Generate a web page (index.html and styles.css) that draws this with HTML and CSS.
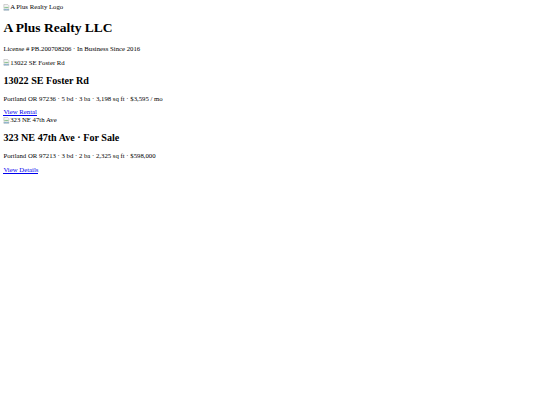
FILE: index.html
```html
<!DOCTYPE html>
<html>
<head>
<meta charset="utf-8">
<title>A Plus Realty LLC</title>
<link rel="stylesheet" href="styles.css">
</head>
<body>
<div class="logo"><svg class="broken" viewBox="0 0 16 16"><path d="M2 1h9l3 3v5l-2 1-2-1-2 1-2-1-2 1-2-1z" fill="#f4f4f4" stroke="#9a9a9a" stroke-width="1"/><path d="M3 10l3-3 2 2 2-2 3 3" fill="none" stroke="#4caf50" stroke-width="1.5"/><path d="M2 12l2 1 2-1 2 1 2-1 2 1 2-1v3H2z" fill="#6bb7e8" stroke="#9a9a9a" stroke-width="1"/></svg>A Plus Realty Logo</div>
<h1 class="title">A Plus Realty LLC</h1>
<p class="text">License # PB.200708206 · In Business Since 2016</p>
<div class="listing">
  <div class="photo"><svg class="broken" viewBox="0 0 16 16"><path d="M2 1h9l3 3v5l-2 1-2-1-2 1-2-1-2 1-2-1z" fill="#f4f4f4" stroke="#9a9a9a" stroke-width="1"/><path d="M3 10l3-3 2 2 2-2 3 3" fill="none" stroke="#4caf50" stroke-width="1.5"/><path d="M2 12l2 1 2-1 2 1 2-1 2 1 2-1v3H2z" fill="#6bb7e8" stroke="#9a9a9a" stroke-width="1"/></svg>13022 SE Foster Rd</div>
  <h2 class="heading">13022 SE Foster Rd</h2>
  <p class="text">Portland OR 97236 · 5 bd · 3 ba · 3,198 sq ft · $3,595 / mo</p>
  <div class="more"><a class="link" href="#">View Rental</a></div>
</div>
<div class="listing">
  <div class="photo"><svg class="broken" viewBox="0 0 16 16"><path d="M2 1h9l3 3v5l-2 1-2-1-2 1-2-1-2 1-2-1z" fill="#f4f4f4" stroke="#9a9a9a" stroke-width="1"/><path d="M3 10l3-3 2 2 2-2 3 3" fill="none" stroke="#4caf50" stroke-width="1.5"/><path d="M2 12l2 1 2-1 2 1 2-1 2 1 2-1v3H2z" fill="#6bb7e8" stroke="#9a9a9a" stroke-width="1"/></svg>323 NE 47th Ave</div>
  <h2 class="heading">323 NE 47th Ave · For Sale</h2>
  <p class="text">Portland OR 97213 · 3 bd · 2 ba · 2,325 sq ft · $598,000</p>
  <div class="more"><a class="link" href="#">View Details</a></div>
</div>
</body>
</html>
```

FILE: styles.css
```css
html { background: #fff; }
body {
  margin: 3.375px;
  font-family: "Liberation Serif", "Times New Roman", serif;
  font-size: 6.75px;
  color: #000;
}
.logo, .photo {
  display: flex;
  align-items: center;
  height: 7.75px;
  line-height: 7.75px;
}
.broken {
  width: 6.75px;
  height: 6.75px;
  flex: none;
}
.title {
  font-size: 13.5px;
  font-weight: bold;
  margin: 9.05px 0;
}
.heading {
  font-size: 10.125px;
  font-weight: bold;
  margin: 8.4px 0;
}
.text {
  margin: 6.75px 0;
}
.more {
  height: 8px;
  display: flex;
  align-items: flex-start;
}
.link {
  display: block;
  line-height: 6px;
  padding-top: 1px;
  color: #0000ee;
  text-decoration: none;
  border-bottom: 1px solid #0000ee;
}
```
